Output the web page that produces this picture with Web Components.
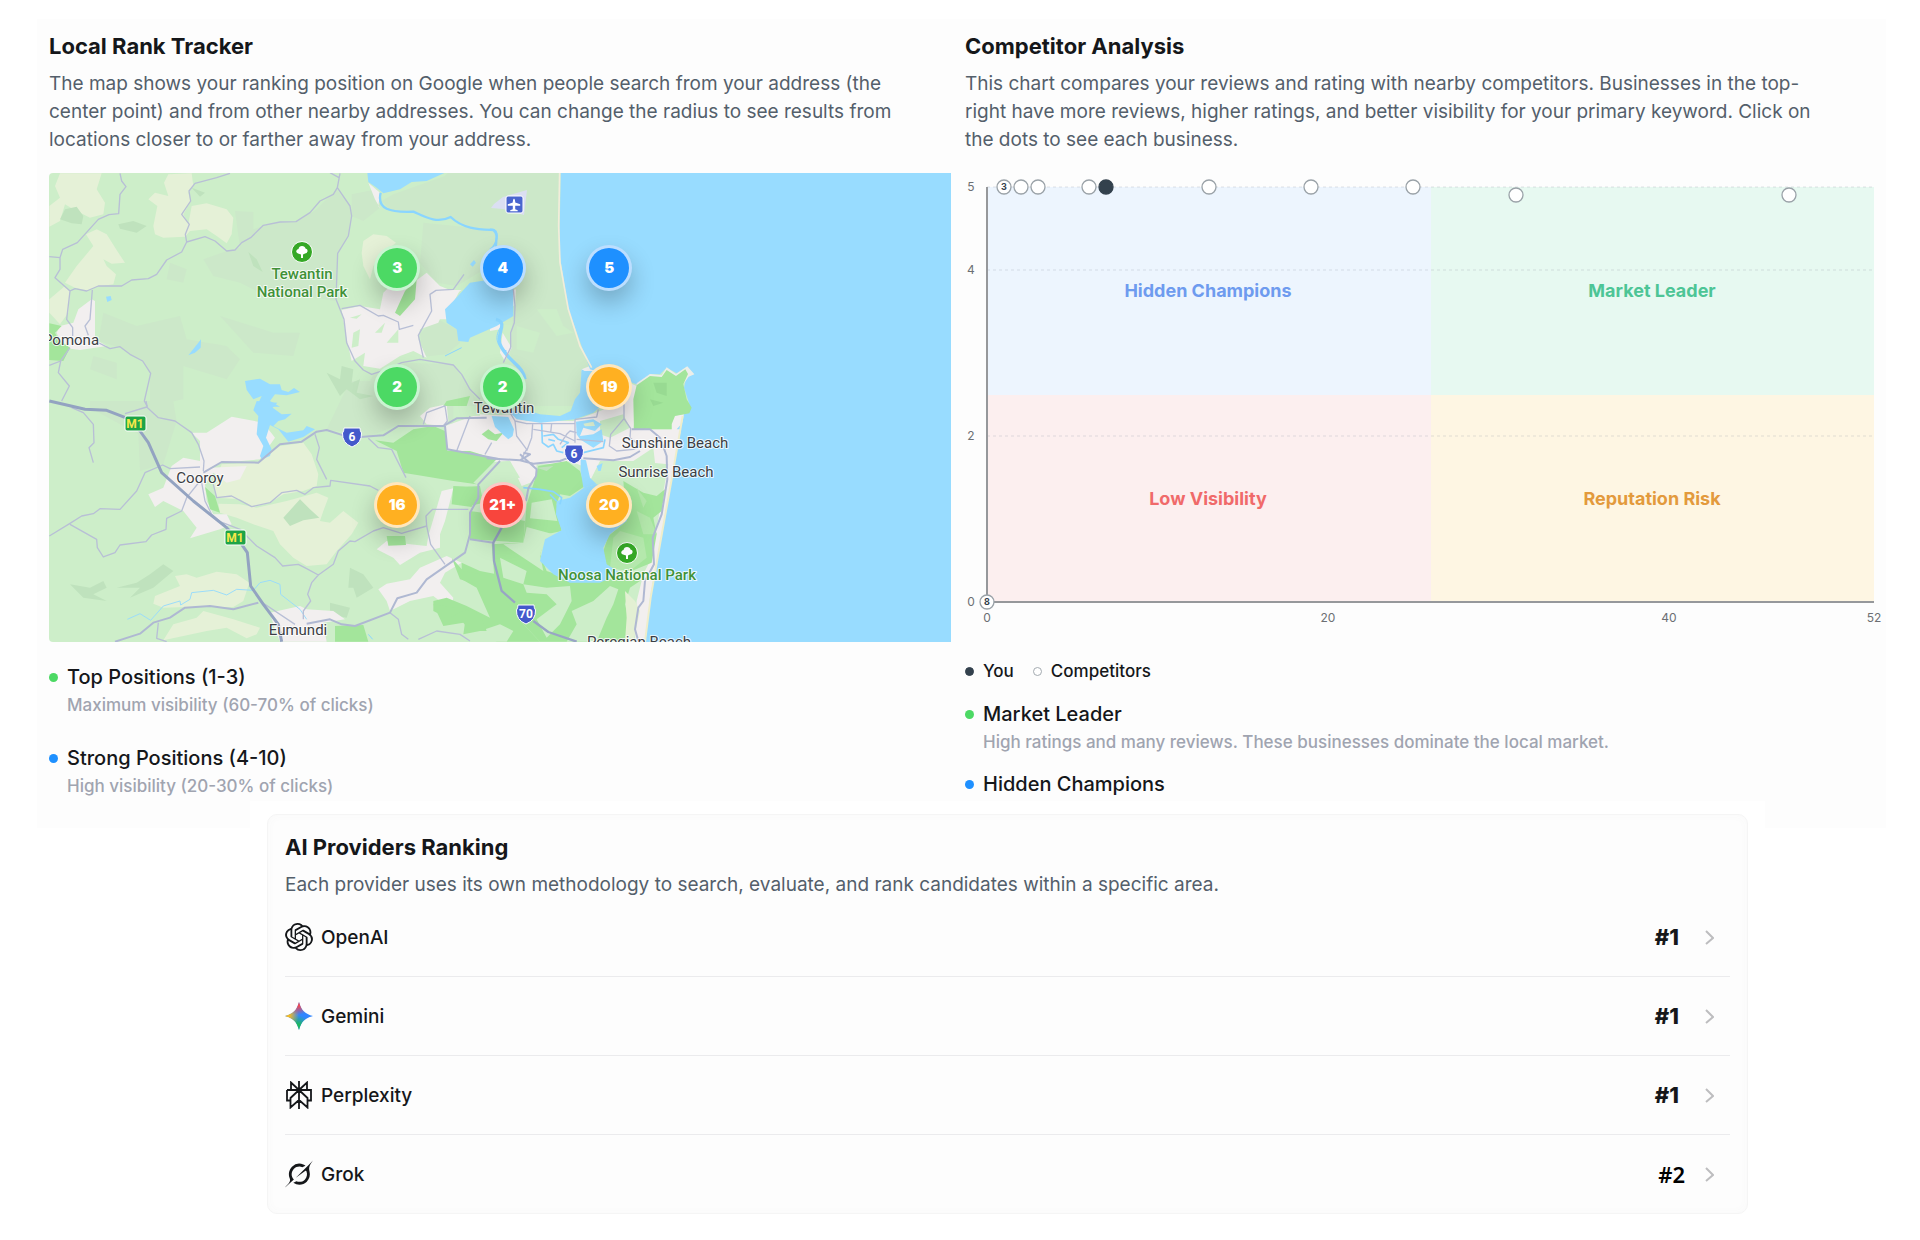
<!DOCTYPE html>
<html lang="en">
<head>
<meta charset="utf-8">
<title>Local visibility report</title>
<style>
  body { margin: 0; background: #fff; font-family: Inter, "Open Sans", sans-serif; color: #15171a; }
</style>
</head>
<body>
<report-page></report-page>

<script>
const define = (name, html, setup) => {
  const tpl = document.createElement('template');
  tpl.innerHTML = html;
  customElements.define(name, class extends HTMLElement {
    connectedCallback() {
      if (this.shadowRoot) return;
      const root = this.attachShadow({ mode: 'open' });
      root.append(tpl.content.cloneNode(true));
      if (setup) setup(this, root);
    }
  });
};

/* Title with a paragraph under it */
define('section-intro', `
<style>
  :host { display: block; }
  h2 { margin: 0 0 10px; font-size: 22px; line-height: 28px; font-weight: 700; }
  p { margin: 0; font-size: 19px; line-height: 28px; color: #545f6b; }
</style>
<h2><slot name="title"></slot></h2>
<p><slot></slot></p>`);

/* Dot, name and optional description */
define('legend-item', `
<style>
  :host { display: flex; gap: 9px; align-items: flex-start; }
  i { flex: none; width: 9px; height: 9px; margin-top: 10px; border-radius: 50%; background: var(--dot); }
  .name { font-size: 20px; line-height: 28px; font-weight: 500; }
  .note { font-size: 17px; line-height: 28px; font-weight: 500; color: #a0a4b0; }
  :host([small]) { align-items: center; }
  :host([small]) i { margin: 0; box-sizing: border-box; border: 1px solid var(--ring, var(--dot)); }
  :host([small]) .name { font-size: 17px; line-height: 24px; }
</style>
<i></i>
<div><div class="name"><slot></slot></div><div class="note"><slot name="note"></slot></div></div>`);

/* Rank marker on the map */
define('rank-pin', `
<style>
  :host { position: absolute; width: 46px; height: 46px; margin: -23px 0 0 -23px; }
  button { width: 46px; height: 46px; padding: 0; border-radius: 50%; border: 3px solid rgba(255,255,255,.7);
    background: var(--pin); background-origin: border-box; color: #fff;
    font: 900 15px/40px Inter, sans-serif; box-shadow: 0 12px 24px rgba(0,0,0,.24); }
</style>
<button type="button"><slot></slot></button>`);

/* Terrain shapes. Each region has its own drawing origin. */
const ORIGIN = { a: [-27, -21], b: [1323, -21], c: [-27, 684], d: [1323, 684], e: [993, 594] };
const LAND = '#cdeec9', FOREST = '#cce8c9', FIELD = '#e5f1d7', TOWN = '#f2efef', PARK = '#a3e59b', SEA = '#98dcff', SHADE = '#bfe2bd';
const AREAS = [
  ['a', FOREST, 'M585 135L640 138 640 190 700 170 770 168 830 130 890 70 935 130 928 205 892 260 885 405 800 390 700 400 600 350 520 330 490 280 560 255 600 245Z'],
  ['a', FOREST, 'M935 85L1010 70 1020 125 970 165 935 150Z M1150 170L1340 190 1350 300 1250 360 1190 350 1140 290Z'],
  ['a', FOREST, 'M190 440L290 480 420 450 440 520 560 540 600 580 560 640 430 600 430 700 330 720 330 620 305 585 240 545 175 525Z M160 570L230 590 230 640 150 610Z M390 290L440 310 430 350 380 340Z M540 450L700 500 780 500 760 570 640 560Z'],
  ['a', FOREST, 'M1025 105L1060 85 1215 30 1225 20 1430 20 1430 230 1370 190 1290 188 1232 152 1188 166 1120 137 1055 137Z'],
  ['a', FOREST, 'M1140 505L1185 455 1250 490 1260 530 1220 565 1150 572Z M1090 590L1240 595 1290 670 1320 720 960 720 1000 625Z'],
  ['b', FOREST, 'M-40 20L212 20 206 260 235 430 305 600 280 640 270 720 100 720 60 560 75 380 0 380Z'],
  ['b', LAND, 'M80 480L150 500 130 560 80 550Z M140 430L200 430 220 480 250 500 200 510Z'],
  ['c', FOREST, 'M150 0L400 0 410 60 370 190 300 210 295 100 150 20Z M930 -60L1240 -60 1240 80 1080 70 990 105 860 85Z'],
  /* open fields */
  ['a', FIELD, 'M60 22L185 22 170 70 195 110 190 145 150 155 100 130 75 115 60 165 28 182 28 120 60 95 45 60Z'],
  ['a', FIELD, 'M385 25L455 22 460 60 445 80 452 105 430 145 445 175 455 120 500 112 560 130 580 155 575 205 560 232 530 210 500 190 450 195 435 212 370 215 345 205 340 180 352 120 325 100 345 80 385 90 372 50Z'],
  ['a', FIELD, 'M138 205L170 190 200 205 235 260 255 290 215 293 190 280 200 300 228 325 220 355 170 362 140 374 105 365 75 350 110 300 160 240Z M28 400L75 360 90 375 85 440 60 475 28 440Z'],
  ['a', FIELD, 'M965 260L970 225 1000 205 1040 210 1068 230 1030 260 1000 300 990 340 970 300Z'],
  ['c', FIELD, 'M545 190L655 185 720 135 790 125 815 160 835 220 830 255 790 270 730 280 690 305 640 318 600 295 530 290 520 255Z'],
  ['c', FIELD, 'M535 308L600 310 650 320 740 300 830 275 865 290 850 330 840 360 870 365 910 330 955 365 935 400 890 450 860 490 800 495 760 470 720 430 700 390 640 370 590 350 540 335Z'],
  ['c', FIELD, 'M345 585L420 555 405 525 440 520 470 530 530 512 590 520 628 545 610 600 580 618 440 618 370 620 340 608Z M490 630L580 655 660 680 650 700 620 712 560 680 500 690 430 705 370 718 400 670 470 650Z'],
  /* hills */
  ['a', SHADE, 'M75 130L110 122 130 150 125 175 95 172 60 160Z M235 175L280 165 320 180 290 200 240 188Z M625 258L650 280 668 318 640 300Z M455 65L495 80 480 92Z M860 620L900 640 905 600 940 610 935 650 960 640 950 680 1000 690 960 700 920 670 900 690Z'],
  ['c', SHADE, 'M730 350L780 295 810 325 838 350 790 358 750 375Z M230 560L290 545 330 520 370 490 400 510 340 560 270 590 300 560Z M90 550L150 560 190 540 200 560 160 580 200 600 130 590Z M930 500L970 520 1000 560 950 590 940 560 925 560Z M870 605L930 620 920 650 870 640Z'],
  /* towns */
  ['a', TOWN, 'M115 430L155 400 165 405 165 520 200 540 120 552 70 545 50 500 60 480 100 470Z'],
  ['a', TOWN, 'M905 432L960 420 1020 430 1030 380 1060 350 1120 350 1160 320 1200 360 1230 372 1265 372 1225 400 1195 470 1140 490 1135 520 1160 575 1120 555 1080 570 1020 608 970 600 975 560 935 585 920 520Z M985 50L1020 80 1015 120 1022 130 1005 100Z'],
  ['a', TOWN, 'M1180 380L1260 372 1240 410 1220 460 1180 460Z'],
  ['c', TOWN, 'M455 95L500 95 575 47 670 65 705 110 660 175 545 185 510 200 620 195 600 235 560 245 520 215 495 250 500 300 520 340 560 340 575 370 540 385 450 412 470 380 430 330 370 300 345 318 325 280 370 260 395 195 430 170 480 180 480 120Z'],
  ['c', TOWN, 'M690 635L780 615 800 625 880 630 915 655 850 665 860 722 720 722 700 670Z M1010 445L1040 420 1110 430 1160 435 1165 405 1205 270 1240 262 1215 360 1200 400 1200 440 1140 455 1080 492 1060 470Z'],
  ['c', TOWN, 'M1015 565L1040 548 1110 535 1140 500 1220 465 1265 485 1215 515 1200 545 1240 590 1232 625 1180 585 1110 600 1050 630 1040 600Z M1140 45L1170 20 1220 10 1225 60 1215 75 1160 70Z M1215 75L1300 45 1430 40 1430 175 1220 145Z'],
  ['d', TOWN, 'M-30 40L75 45 110 60 250 60 330 30 400 0 440 0 430 85 545 85 545 45 582 40 520 420 490 560 465 722 435 722 440 600 460 520 480 480 500 380 515 300 535 190 430 180 330 180 300 240 290 260 290 200 240 180 210 188 140 190 135 240 95 255 60 180 -30 185Z'],
  ['b', TOWN, 'M60 375L78 370 75 415 45 452 30 445Z M38 500L65 545 45 585 30 560Z M0 480L40 465 30 490 0 495Z M275 610L300 600 440 660 470 640 440 720 280 720Z'],
  /* reserves */
  ['d', LAND, 'M430 180L490 140 500 230 510 290 490 320 450 260 400 240Z M60 180L0 185 0 240 90 230Z M330 60L400 40 420 80 360 110 330 100Z'],
  ['e', PARK, 'M475 285L560 270 600 300 615 345 570 375 540 370 530 400 545 480 500 490 480 550 500 600 560 620 640 632 720 620 780 630 750 650 735 700 760 812 480 812 430 760 380 700 345 640 335 520 430 515 440 400 460 340Z'],
  ['e', PARK, 'M225 350L300 345 310 395 270 405 225 395Z M270 420L340 430 435 450 430 515 270 505Z M245 575L300 600 350 610 380 690 430 760 330 740 290 650 245 625Z M160 690L200 680 260 705 330 740 430 760 480 812 350 812 300 780 250 790 255 755 200 740 160 720Z M305 190L325 175 345 190 370 185 350 210 325 205Z'],
  ['e', LAND, 'M455 395L515 385 532 450 450 442Z M440 468L520 490 500 500 480 550 490 600 430 560 370 520 430 515Z M360 560L440 600 430 640 370 620Z M430 640L500 650 570 645 575 690 540 760 500 800 470 745 530 700 500 670 440 665Z M575 720L640 690 690 645 715 655 700 700 680 740 650 812 560 812 590 760Z M300 780L360 760 400 780 380 812 300 812Z'],
  ['e', SHADE, 'M300 400L330 405 310 420Z M470 290L520 285 500 300Z M790 60L830 70 800 100Z'],
  ['e', '#e3f0d3', 'M735 660L765 690 780 720 760 812 735 812 740 740Z'],
  ['d', PARK, 'M400 240L460 275 500 285 525 265 515 330 490 350 500 400 485 485 425 510 350 500 340 450 355 405 410 360Z'],
  ['e', '#b4e8ac', 'M770 420L810 440 830 490 790 490Z M700 500L720 480 790 500 800 560 750 600 690 590Z M770 350L800 390 790 410Z'],
  ['c', PARK, 'M1005 118L1060 125 1120 85 1180 75 1215 90 1222 150 1290 150 1370 175 1300 245 1310 250 1240 240 1090 215 1070 150Z M1240 255L1310 258 1295 318 1235 310Z M1040 405L1095 405 1098 432 1045 434Z M885 675L970 672 985 722 885 722Z M495 258L525 285 540 335 510 325Z'],
  ['c', PARK, 'M1235 470L1270 510 1320 520 1310 550 1260 535Z M1180 610L1245 620 1230 650 1280 625 1320 640 1340 690 1290 690 1270 665 1210 675Z'],
  ['a', PARK, 'M28 472L65 480 45 500 55 520 90 545 70 585 28 582Z M1095 375L1130 340 1125 400 1080 450 1065 440Z M1220 705L1290 690 1280 720 1210 720Z'],
  ['a', LAND, 'M1005 500L1035 470 1025 500Z M1040 530L1075 490 1075 530Z M930 455L965 445 950 458Z M940 500L960 490 955 540 935 545Z'],
  /* water */
  ['b', SEA, 'M212 20L1390 20 1390 770 560 790 605 740 595 705 582 665 590 630 612 625 590 602 560 622 530 605 510 625 480 625 440 655 300 610 235 430 208 260Z'],
  ['d', SEA, 'M605 0L1390 0 1390 740 465 740 480 590 545 230 582 40 608 20Z'],
  ['b', '#eceeea', 'M440 652L480 624 515 628 530 604 558 624 592 601 613 625 596 632 580 655 440 670Z'],
  ['b', PARK, 'M440 658L480 630 515 633 530 612 558 630 586 610 594 624 580 655 590 700 605 725 598 742 555 750 545 775 545 790 432 790 430 700Z'],
  ['b', '#98da92', 'M490 650L530 650 530 690 500 680Z M480 700L520 710 490 720Z'],
  ['b', SEA, 'M275 610L300 625 285 640 300 720 240 740 255 700 270 680Z'],
  ['a', SEA, 'M982 20L1215 20 1160 45 1115 48 1080 70 1030 82 1010 65 985 48Z M1215 430L1240 405 1290 350 1420 330 1420 450 1370 480 1290 515 1285 528 1255 525 1250 490 1220 470Z M1290 295L1302 282 1308 290 1298 302Z M198 392L212 390 215 402 202 408Z M445 568L475 530 483 520 482 545 465 560Z'],
  ['a', SEA, 'M615 645L660 638 690 655 720 655 725 672 745 678 762 666 780 678 740 688 705 685 690 705 720 722 650 722 665 690 640 700 620 672Z'],
  ['c', SEA, 'M650 0L712 5 698 20 725 40 755 38 735 55 715 60 700 75 740 95 790 88 800 75 825 85 790 108 745 122 715 85 690 72 678 110 695 145 690 165 665 175 660 165 670 135 650 100 655 45 640 28Z'],
  ['d', SEA, 'M285 258L320 250 360 270 400 260 425 300 410 360 360 400 340 440 350 490 390 515 330 545 240 545 190 520 150 480 165 415 215 388 198 340 200 300 240 290Z'],
  ['e', SEA, 'M385 120L440 118 480 130 540 135 590 112 610 70 605 0 690 0 668 100 640 125 585 145 480 155 410 145Z M335 135L385 138 402 175 398 195 385 205 368 190 345 168Z M602 265L618 268 630 320 650 340 610 350 602 300Z M650 285L668 276 662 300 655 300Z'],
  ['e', SEA, 'M588 152L640 145 665 160 645 180 610 170 600 195 640 190 665 175 670 210 640 230 600 205 590 190Z'],
  ['e', '#dcefd0', 'M610 158L640 152 645 165 615 166Z'],
];
const LINES = [
  /* rivers */
  ['a', '#8ad5ff', 7, 'M1022 80C1010 130 1050 140 1120 137C1150 150 1190 175 1232 153C1270 190 1320 190 1360 192C1385 210 1350 250 1380 290'],
  ['b', '#8ad5ff', 5, 'M0 190C35 185 20 240 0 250'],
  ['b', '#8ad5ff', 10, 'M18 460C60 470 10 510 35 545C60 590 100 600 105 640'],
  ['c', '#9bdcfa', 3, 'M262 655L300 638 332 658 370 615 420 600 422 612 450 595 455 575 520 568 560 582 590 565 640 568 660 545 690 538 720 550 722 580 780 625 800 655'],
  ['a', '#8ad5ff', 3, 'M1265 545L1215 570 M1385 480C1360 510 1370 545 1400 555'],
  ['e', '#8ad5ff', 5, 'M485 155L487 215 505 228 520 220 530 240 550 245 M490 195L520 190 535 205 565 215 545 230 M505 205L525 210 M610 245L670 230 675 205 M430 350L480 355 520 362 545 380 540 400 M510 370L530 390'],
  ['c', '#8ad5ff', 3, 'M985 700L998 715'],
  /* beaches */
  ['b', '#f2edda', 5, 'M209 20L206 180 210 290 235 430 270 540 305 605'],
  ['d', '#efeecb', 6, 'M578 45L545 235 510 430 482 590 465 722'],
  /* minor roads */
  ['a', '#b8bfd6', 4, 'M240 22L245 45 258 62 240 85 236 143 207 146 175 160 112 230 68 250 60 275 60 310 45 335 90 375 105 368 140 375 175 360 245 360 275 342 325 338 350 325 380 282 425 258 440 228 495 212 525 225 560 255 585 252 605 230 632 215 670 178 720 168 768 167 810 140 840 105 880 85 892 65 900 22 M870 20L897 35 M892 65L930 120 935 150 925 210 893 262 888 400 912 460 920 530 945 585 970 612 995 625 1040 610 1085 590 1140 580 1240 597 1265 625 1290 670 1320 700 M28 272L60 275 M440 228L436 205 448 175 425 145 452 105 447 75 465 52 530 35 570 22 M90 375L80 460 98 485 98 510 M157 372L150 460 135 480 145 508 M165 525L210 548 240 542 270 565 308 585 332 622 313 705 322 722 M28 598L62 585 55 620 88 660 65 705 M62 585L90 545 M905 428L960 418 1015 450 1030 448 1075 468 1078 490 1120 478 M1272 325L1240 370 1188 373 1170 385 1175 435 1135 508 1150 575'],
  ['c', '#b8bfd6', 4, 'M255 38L320 18 355 50 405 60 455 95 475 130 492 180 490 210 M318 0L322 20 M95 20L130 35 160 70 162 125 147 140 160 185 M28 405L90 367 125 345 160 338 180 323 240 325 290 270 315 215 368 192 390 203 480 198 M90 370L170 415 172 440 190 468 225 455 240 432 318 422 335 402 378 385 380 352 425 330 440 290 480 240 M485 245L495 300 515 340 550 370 M520 250L530 290 575 285 635 317 690 305 725 275 770 268 795 280 820 260 870 255 872 238 990 255 1015 268 M825 100L838 140 830 175 860 235 M985 112L1015 140 1055 145 1075 185 1098 230 M540 362L600 385 650 435 705 470 728 495 775 490 800 503 835 522 880 490 895 450 930 420 945 422 1000 390 1030 380 1085 397 1160 375 1158 345 1178 325 1285 325 M835 522L815 545 803 580 812 600 790 630 790 655 M1160 375L1172 430 1215 490 M660 600L765 670 M355 665L350 712 380 722 M1050 635L1075 655 1085 700 1105 715 M1135 715L1190 690 1260 700 1290 720 M1150 70L1160 35 1215 15 1222 60 1210 75 M1290 45L1250 150 M1355 125L1335 160'],
  ['b', '#b8bfd6', 4, 'M70 370L75 420 73 470 62 500 62 545 40 590'],
  ['e', '#b8bfd6', 4, 'M390 125L405 150 410 195 440 235 425 262 M458 160L455 200 440 240 M405 150L440 158 585 158 M460 175L540 188 585 210 M515 158L512 185 M540 220L560 190 570 180 590 185 M585 145L585 215 M585 145L650 138 655 115 M732 100L732 143 692 190 688 225 710 240 760 235 782 225 M732 143L752 172 750 200 782 225 M590 205L670 212'],
  /* main roads */
  ['c', '#afb8d2', 6, 'M225 722L300 698 340 665 390 650 435 620 510 615 580 625 655 605 M490 215L545 183 655 185 720 130 785 122 830 92 860 87 910 103 M960 108L1030 103 1075 75 1210 75 1250 52 1340 50 M1215 75L1222 145 1380 175 M800 668L870 655 905 670 945 675 1050 635 1072 592 1130 575 1160 535 1275 455 1290 400 1290 335 1315 290 1315 250 1380 180 M1290 415L1360 425'],
  ['d', '#afb8d2', 6, 'M-10 172L90 178 120 160 100 155 M90 160L140 205 138 225 115 262 108 300 M90 178L130 188 210 180 230 172 M280 172L370 178 420 168 450 150 M425 85L480 85 510 110 530 165 532 235 515 340 488 410 492 490 465 540 460 600 445 620 435 685 445 720'],
  ['d', '#98a5c4', 7, 'M35 380L10 425 12 480 35 570 75 605 M130 660L175 693 260 722'],
  /* motorway */
  ['c', '#93a3c1', 9, 'M28 0L135 25 200 28 270 55 300 90 325 125 365 215 460 300 560 380 605 430 622 455 632 555 670 610 715 670 725 722'],
];

define('rank-map', `
<style>
  :host { display: block; position: relative; border-radius: 4px 0 0 4px; overflow: hidden; }
  svg { display: block; width: 100%; height: auto; }
  text { font-family: Roboto, sans-serif; font-size: 15px; fill: #3b3e44; stroke: #fff; stroke-width: 2px; stroke-opacity: .8; paint-order: stroke; stroke-linejoin: round; text-anchor: middle; font-weight: 400; }
  .park { fill: #3f9138; font-weight: 500; }
  .shield { font-size: 12px; font-weight: 700; fill: #fff; stroke: none; }
  .m1 { fill: #f5e84a; }
</style>
<svg viewBox="0 0 902 469" role="img" aria-label="Map of rankings around Tewantin">
  <rect width="902" height="469" fill="${LAND}"/>
  <g id="land" transform="scale(.33333)" stroke-linejoin="round"></g>
  <g fill="#fff" stroke="#fff" stroke-width="1">
    <path d="M454 24L478 17 475 42 454 36 442 35 445 31Z" fill="#dbdff2" stroke="none"/>
    <rect x="457" y="23" width="17" height="17" rx="2" fill="#4a66cf"/>
    <path d="M465 25.500q1.200 1 1.200 3v1l5 1.800v1.500h-5v3.500l2.500 1v1h-7.500v-1l2.600-1v-3.500h-5v-1.500l5-1.800v-1q0-2 1.200-3z" stroke="none"/>
    <g id="trees"></g>
    <g id="shields"></g>
  </g>
  <g>
    <text class="park" x="253" y="106">Tewantin</text>
    <text class="park" x="253" y="124">National Park</text>
    <text x="22" y="172">Pomona</text>
    <text x="151" y="310">Cooroy</text>
    <text x="249" y="462">Eumundi</text>
    <text x="455" y="240">Tewantin</text>
    <text x="626" y="275">Sunshine Beach</text>
    <text x="617" y="304">Sunrise Beach</text>
    <text class="park" x="578" y="407">Noosa National Park</text>
    <text x="590" y="474">Peregian Beach</text>
  </g>
</svg>
<slot></slot>`, (host, root) => {
  const shift = q => `transform="translate(${ORIGIN[q].join(' ')})"`;
  root.getElementById('land').innerHTML =
    AREAS.map(([q, c, d]) => `<path ${shift(q)} fill="${c}" d="${d}"/>`).join('') +
    LINES.map(([q, c, w, d]) => `<path ${shift(q)} fill="none" stroke="${c}" stroke-width="${w}" d="${d}"/>`).join('');
  root.getElementById('trees').innerHTML = [[253, 79], [578, 380]].map(([x, y]) => `
    <g transform="translate(${x} ${y})"><circle r="10.500" fill="#35a826"/>
    <path stroke="none" d="M-1 6V2.500L-4 1.500Q-6.500 .5-5.500-1.500Q-5-3-3.500-3Q-3-6 0-6Q3-6 3.500-3.500Q6-3 5.500-.5Q5 1.500 3 1.500L1 2.500V6Z"/></g>`).join('');
  root.getElementById('shields').innerHTML =
    [[86, 250], [186, 364]].map(([x, y]) => `<rect x="${x - 10}" y="${y - 7}" width="21" height="15" rx="2" fill="#1ea446"/><text class="shield m1" x="${x}" y="${y + 5}">M1</text>`).join('') +
    [[303, 264, '6'], [525, 281, '6'], [477, 441, '70']].map(([x, y, t]) => `<path transform="translate(${x} ${y})" fill="#4459cb" d="M-8-9H8Q8-6 9.500-4Q10 6 0 10Q-10 6-9.500-4Q-8-6-8-9Z"/><text class="shield" x="${x}" y="${y + 4}">${t}</text>`).join('');
});

/* Scatter chart of rating against review count */
define('competitor-chart', `
<style>
  :host { display: block; }
  svg { display: block; width: 100%; height: auto; overflow: visible; }
  text { font-size: 12px; fill: #6c6f73; text-anchor: middle; }
  .zone { font-size: 18px; font-weight: 700; }
  .count { font-size: 9px; font-weight: 700; fill: #33414d; }
</style>
<svg viewBox="0 0 919 469" role="img" aria-label="Rating by number of reviews"></svg>`, (host, root) => {
  const L = 22, R = 909, T = 14, B = 429;
  const px = v => Math.round(L + v * (R - L) / 52), py = v => Math.round(B - v * (B - T) / 5);
  const mx = px(26), my = py(2.5);
  const zones = [[L, T, '#edf5fe', '#6e9bef', 'Hidden Champions'], [mx, T, '#e7f9f1', '#4dc596', 'Market Leader'],
    [L, my, '#fcefef', '#f06a6a', 'Low Visibility'], [mx, my, '#fef6e3', '#e39a3c', 'Reputation Risk']];
  let s = zones.map(([x, y, bg, fg, name]) =>
    `<rect x="${x}" y="${y}" width="${x === L ? mx - L : R - mx}" height="${y === T ? my - T : B - my}" fill="${bg}"/>
     <text class="zone" x="${x + 221}" y="${y + 110}" style="fill:${fg}">${name}</text>`).join('');
  s += [5, 4, 2].map(v => `<path d="M${L} ${py(v)}H${R}" stroke="#8a94a0" stroke-opacity=".25" stroke-dasharray="3 3"/>`).join('');
  s += `<path d="M${L} ${T}V${B}H${R}" fill="none" stroke="#96989b" stroke-width="2"/>`;
  s += [5, 4, 2, 0].map(v => `<text x="6" y="${py(v) + 4}">${v}</text>`).join('');
  s += [0, 20, 40, 52].map(v => `<text x="${px(v)}" y="${B + 20}">${v}</text>`).join('');
  s += [[1, 5, 3], [2, 5], [3, 5], [6, 5], [7, 5, 'you'], [13, 5], [19, 5], [25, 5], [31, 4.9], [47, 4.9], [0, 0, 8]].map(([x, y, t]) =>
    `<circle cx="${px(x)}" cy="${py(y)}" r="7" fill="${t === 'you' ? '#33414d' : '#fff'}" stroke="${t === 'you' ? '#33414d' : '#9aa2a8'}" stroke-width="1.300"/>` +
    (t > 0 ? `<text class="count" x="${px(x)}" y="${py(y) + 3}">${t}</text>` : '')).join('');
  root.querySelector('svg').innerHTML = s;
});

/* One provider with its rank */
define('provider-row', `
<style>
  :host { display: block; border-bottom: 1px solid #ebebed; }
  :host(:last-of-type) { border: 0; }
  a { display: flex; align-items: center; height: 78px; padding-right: 16px; color: inherit; text-decoration: none; }
  .name { flex: 1; margin-left: 8px; font-size: 19px; font-weight: 500; }
  .rank { font-size: 22px; font-weight: 800; margin-right: 26px; }
  :host([runner-up]) .rank { font: 600 22px "Noto Sans", sans-serif; color: #000; margin-right: 20px; }
  .chevron { width: 9px; height: 15px; fill: none; stroke: #bdbdbf; stroke-width: 2; }
  ::slotted(svg) { width: 28px; height: 28px; }
</style>
<a href="#"><slot name="icon"></slot><span class="name"><slot></slot></span><span class="rank"><slot name="rank"></slot></span>
<svg class="chevron" viewBox="0 0 9 15" aria-hidden="true"><path d="M1 1L8 8 1 14"/></svg></a>`);

define('report-page', `
<style>
  :host { display: block; }
  .panel { margin: 19px 34px 0 37px; padding: 13px 2px 28px 12px; background: #fdfdfd; display: grid;
    grid-template-columns: minmax(0, 902fr) minmax(0, 919fr); column-gap: 14px; align-items: start; }
  .panel section-intro { padding-right: 12px; margin-bottom: 19px; }
  .panel .right section-intro { padding-right: 40px; }
  .legend { display: flex; flex-direction: column; gap: 25px; margin-top: 21px; }
  .who { display: flex; gap: 19px; margin-top: 17px; }
  .right .legend { gap: 14px; margin-top: 17px; }
  .green { --dot: #4cd964; --pin: #4cd964; }
  .blue { --dot: #1e90ff; --pin: #1e90ff; }
  .orange { --pin: #ffb021; }
  .red { --pin: #f8453d; }
  .you { --dot: #33414d; }
  .others { --dot: #fff; --ring: #a3aab0; }
  .sheet { position: relative; margin: -27px 155px 0 250px; padding: 13px 17px 27px; background: #fff; }
  .card { border: 1px solid #f5f5f5; border-radius: 10px; background: #fdfdfd; padding: 18px 17px 0; box-shadow: inset 0 0 10px #f9f9f9; }
  .card section-intro { margin-bottom: -1px; }
</style>
<main>
  <div class="panel">
    <section>
      <section-intro><span slot="title">Local Rank Tracker</span>The map shows your ranking position on Google when people search from your address (the center point) and from other nearby addresses. You can change the radius to see results from locations closer to or farther away from your address.</section-intro>
      <rank-map>
        <rank-pin class="green" style="left:38.6%;top:20.3%">3</rank-pin>
        <rank-pin class="blue" style="left:50.3%;top:20.3%">4</rank-pin>
        <rank-pin class="blue" style="left:62.1%;top:20.3%">5</rank-pin>
        <rank-pin class="green" style="left:38.6%;top:45.6%">2</rank-pin>
        <rank-pin class="green" style="left:50.3%;top:45.6%">2</rank-pin>
        <rank-pin class="orange" style="left:62.1%;top:45.6%">19</rank-pin>
        <rank-pin class="orange" style="left:38.6%;top:70.8%">16</rank-pin>
        <rank-pin class="red" style="left:50.3%;top:70.8%">21+</rank-pin>
        <rank-pin class="orange" style="left:62.1%;top:70.8%">20</rank-pin>
      </rank-map>
      <div class="legend">
        <legend-item class="green">Top Positions (1-3)<span slot="note">Maximum visibility (60-70% of clicks)</span></legend-item>
        <legend-item class="blue">Strong Positions (4-10)<span slot="note">High visibility (20-30% of clicks)</span></legend-item>
      </div>
    </section>
    <section class="right">
      <section-intro><span slot="title">Competitor Analysis</span>This chart compares your reviews and rating with nearby competitors. Businesses in the top-<br>right have more reviews, higher ratings, and better visibility for your primary keyword. Click on the dots to see each business.</section-intro>
      <competitor-chart></competitor-chart>
      <div class="who">
        <legend-item small class="you">You</legend-item>
        <legend-item small class="others">Competitors</legend-item>
      </div>
      <div class="legend">
        <legend-item class="green">Market Leader<span slot="note">High ratings and many reviews. These businesses dominate the local market.</span></legend-item>
        <legend-item class="blue">Hidden Champions</legend-item>
      </div>
    </section>
  </div>
  <div class="sheet">
    <section class="card">
      <section-intro><span slot="title">AI Providers Ranking</span>Each provider uses its own methodology to search, evaluate, and rank candidates within a specific area.</section-intro>
      <provider-row>
        <svg slot="icon" viewBox="0 0 24 24" fill="#15171a" aria-hidden="true"><path d="M22.2819 9.8211a5.9847 5.9847 0 0 0-.5157-4.9108 6.0462 6.0462 0 0 0-6.5098-2.9A6.0651 6.0651 0 0 0 4.9807 4.1818a5.9847 5.9847 0 0 0-3.9977 2.9 6.0462 6.0462 0 0 0 .7427 7.0966 5.98 5.98 0 0 0 .511 4.9107 6.051 6.051 0 0 0 6.5146 2.9001A5.9847 5.9847 0 0 0 13.2599 24a6.0557 6.0557 0 0 0 5.7718-4.2058 5.9894 5.9894 0 0 0 3.9977-2.9001 6.0557 6.0557 0 0 0-.7475-7.0729zm-9.022 12.6081a4.4755 4.4755 0 0 1-2.8764-1.0408l.1419-.0804 4.7783-2.7582a.7948.7948 0 0 0 .3927-.6813v-6.7369l2.02 1.1686a.071.071 0 0 1 .038.052v5.5826a4.504 4.504 0 0 1-4.4945 4.4944zm-9.6607-4.1254a4.4708 4.4708 0 0 1-.5346-3.0137l.142.0852 4.783 2.7582a.7712.7712 0 0 0 .7806 0l5.8428-3.3685v2.3324a.0804.0804 0 0 1-.0332.0615L9.74 19.9502a4.4992 4.4992 0 0 1-6.1408-1.6464zM2.3408 7.8956a4.485 4.485 0 0 1 2.3655-1.9728V11.6a.7664.7664 0 0 0 .3879.6765l5.8144 3.3543-2.0201 1.1685a.0757.0757 0 0 1-.071 0l-4.8303-2.7865A4.504 4.504 0 0 1 2.3408 7.872zm16.5963 3.8558L13.1038 8.364 15.1192 7.2a.0757.0757 0 0 1 .071 0l4.8303 2.7913a4.4944 4.4944 0 0 1-.6765 8.1042v-5.6772a.79.79 0 0 0-.407-.667zm2.0107-3.0231l-.142-.0852-4.7735-2.7818a.7759.7759 0 0 0-.7854 0L9.409 9.2297V6.8974a.0662.0662 0 0 1 .0284-.0615l4.8303-2.7866a4.4992 4.4992 0 0 1 6.6802 4.66zM8.3065 12.863l-2.02-1.1638a.0804.0804 0 0 1-.038-.0567V6.0742a4.4992 4.4992 0 0 1 7.3757-3.4537l-.142.0805L8.704 5.459a.7948.7948 0 0 0-.3927.6813zm1.0976-2.3654l2.602-1.4998 2.6069 1.4998v2.9994l-2.5974 1.4997-2.6067-1.4997Z"/></svg>
        OpenAI<span slot="rank">#1</span></provider-row>
      <provider-row>
        <svg slot="icon" viewBox="0 0 28 28" aria-hidden="true">
          <defs>
            <radialGradient id="gr" gradientUnits="userSpaceOnUse" cx="13" cy="0" r="13"><stop offset=".3" stop-color="#f3474f"/><stop offset="1" stop-color="#f3474f" stop-opacity="0"/></radialGradient>
            <radialGradient id="gy" gradientUnits="userSpaceOnUse" cx="0" cy="13" r="14"><stop offset=".3" stop-color="#fbbc1a"/><stop offset="1" stop-color="#fbbc1a" stop-opacity="0"/></radialGradient>
            <radialGradient id="gg" gradientUnits="userSpaceOnUse" cx="12" cy="28" r="15"><stop offset=".4" stop-color="#1db760"/><stop offset="1" stop-color="#1db760" stop-opacity="0"/></radialGradient>
          </defs>
          <path fill="#3186ff" d="M14 0C16 8 20 12 28 14C20 16 16 20 14 28C12 20 8 16 0 14C8 12 12 8 14 0Z"/>
          <path fill="url(#gg)" d="M14 0C16 8 20 12 28 14C20 16 16 20 14 28C12 20 8 16 0 14C8 12 12 8 14 0Z"/>
          <path fill="url(#gy)" d="M14 0C16 8 20 12 28 14C20 16 16 20 14 28C12 20 8 16 0 14C8 12 12 8 14 0Z"/>
          <path fill="url(#gr)" d="M14 0C16 8 20 12 28 14C20 16 16 20 14 28C12 20 8 16 0 14C8 12 12 8 14 0Z"/>
        </svg>
        Gemini<span slot="rank">#1</span></provider-row>
      <provider-row>
        <svg slot="icon" viewBox="0 0 28 28" fill="none" stroke="#15171a" stroke-width="1.800" aria-hidden="true"><path d="M14 0V28M14 9L6 1.500V9M14 9L22 1.500V9M2 9H26V19.500H22.500M2 9V19.500H5.500M14 9L5.500 17V26.500L14 19M14 9L22.500 17V26.500L14 19"/></svg>
        Perplexity<span slot="rank">#1</span></provider-row>
      <provider-row runner-up>
        <svg slot="icon" viewBox="0 0 24 24" fill="#15171a" aria-hidden="true"><path d="M9.27 15.29l7.978-5.897c.391-.29.95-.177 1.137.272.98 2.369.542 5.215-1.41 7.169-1.951 1.954-4.667 2.382-7.149 1.406l-2.711 1.257c3.889 2.661 8.611 2.003 11.562-.953 2.341-2.344 3.066-5.539 2.388-8.42l.006.007c-.983-4.232.242-5.924 2.75-9.383.06-.082.12-.164.179-.248l-3.301 3.305v-.01L9.267 15.292M7.623 16.723c-2.792-2.67-2.31-6.801.071-9.184 1.761-1.763 4.647-2.483 7.166-1.425l2.705-1.25a7.808 7.808 0 00-1.829-1A8.975 8.975 0 005.984 5.83c-2.533 2.536-3.33 6.436-1.962 9.764 1.022 2.487-.653 4.246-2.34 6.022-.599.63-1.199 1.259-1.682 1.925l7.62-6.815"/></svg>
        Grok<span slot="rank">#2</span></provider-row>
    </section>
  </div>
</main>`);
</script>
</body>
</html>
